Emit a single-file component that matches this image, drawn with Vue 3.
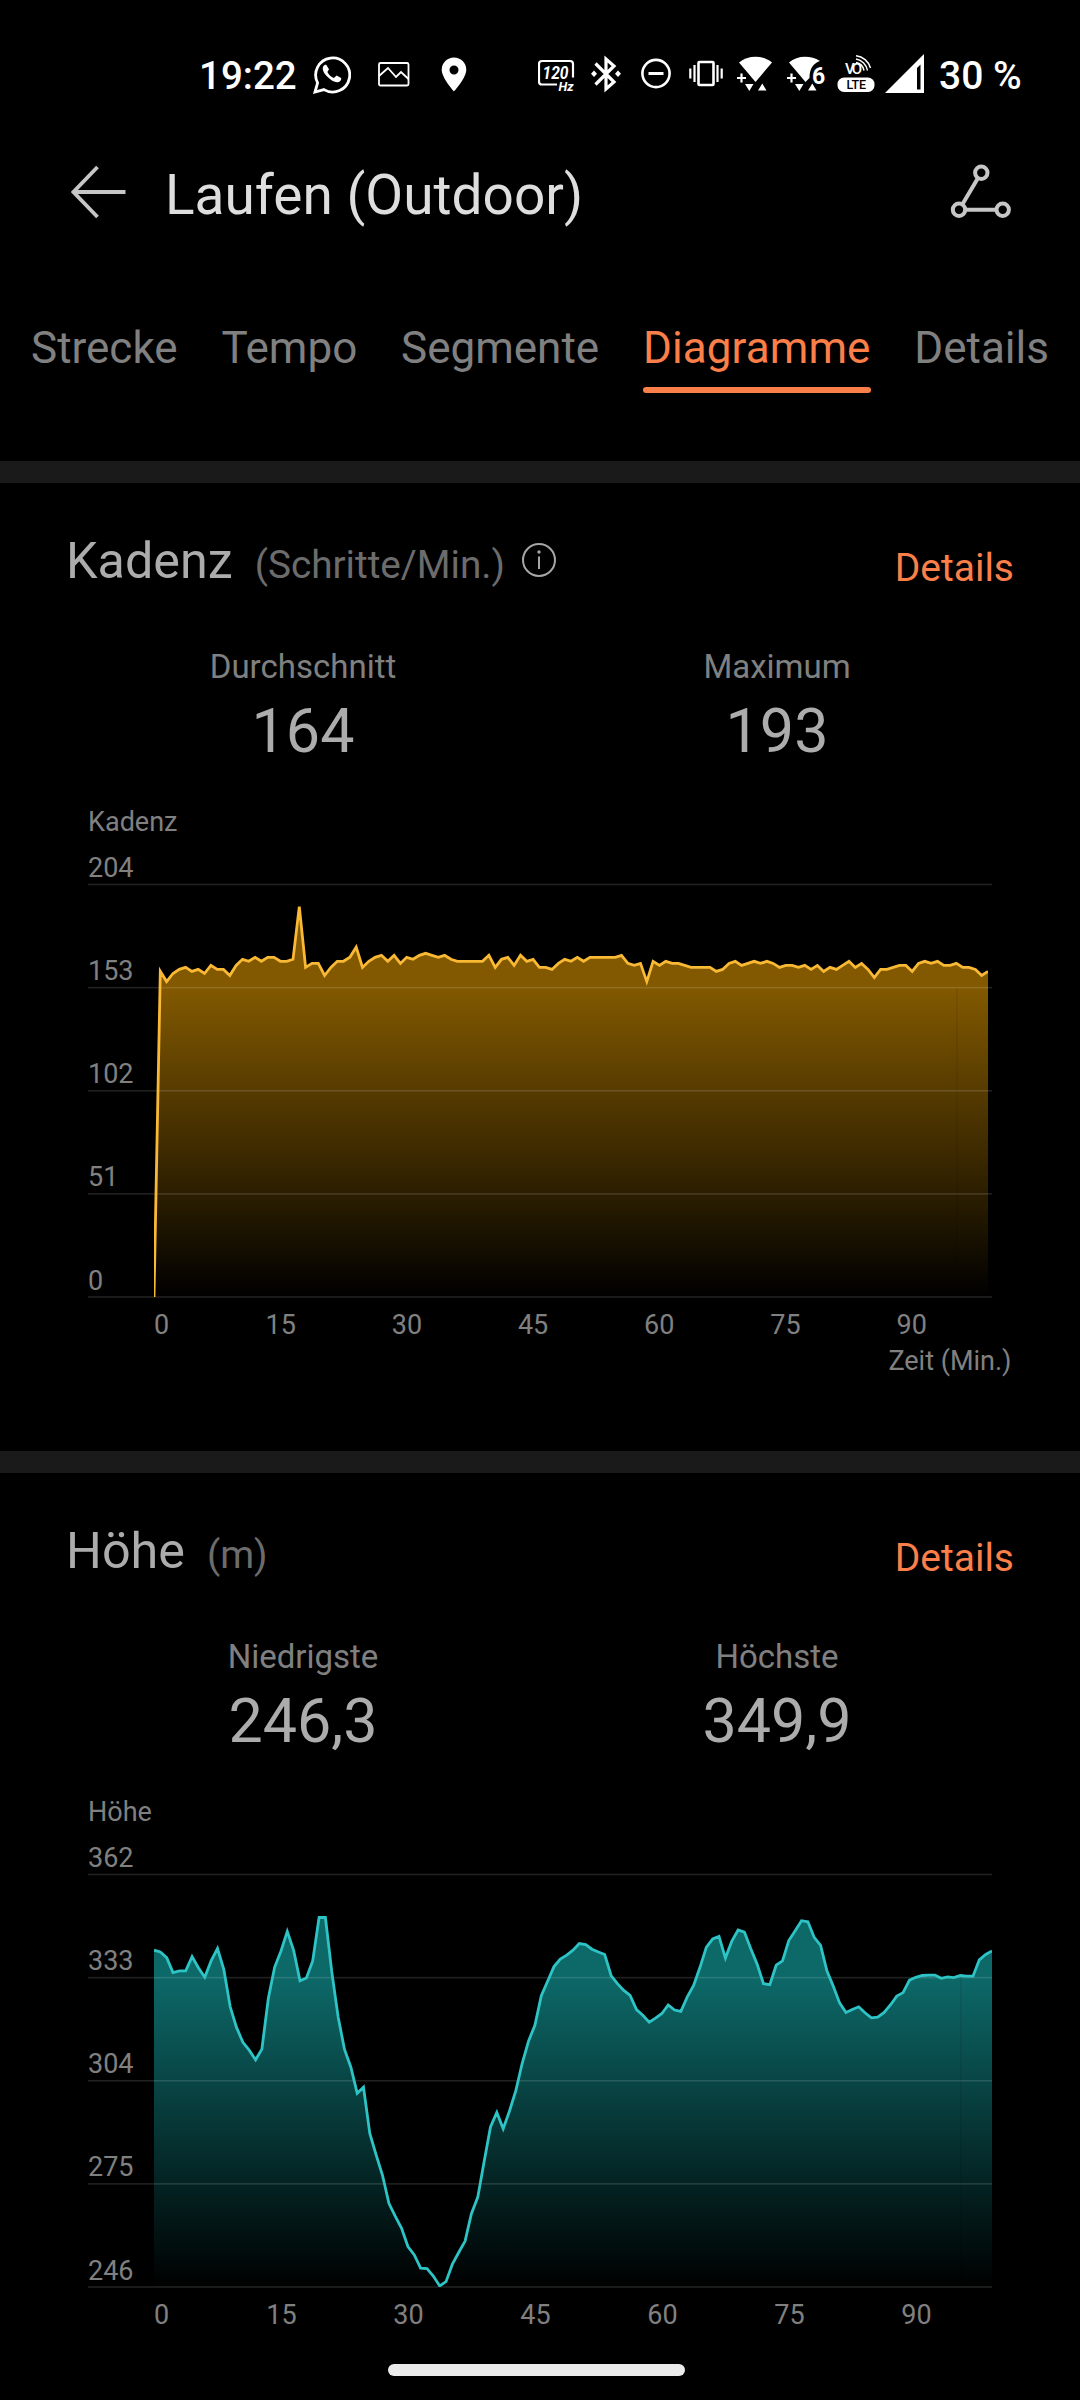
<script setup>
const tabs = ['Strecke', 'Tempo', 'Segmente', 'Diagramme', 'Details']
const activeTab = 'Diagramme'

const cadence = [
  0, 161, 156, 160, 162, 163, 161, 162, 160, 164, 162, 162, 159, 164, 167, 166, 168, 166, 168, 168,
  166, 166, 167, 193, 163, 165, 165, 159, 163, 166, 166, 168, 173, 163, 166, 168, 169, 166, 169, 165,
  168, 167, 169, 170, 169, 168, 169, 167, 166, 166, 166, 166, 166, 169, 163, 167, 168, 164, 169, 166,
  167, 163, 163, 162, 165, 167, 166, 168, 166, 168, 168, 168, 168, 168, 169, 165, 164, 165, 156, 166,
  164, 166, 165, 165, 164, 163, 163, 163, 163, 161, 162, 165, 166, 164, 165, 166, 165, 166, 165, 163,
  164, 164, 163, 164, 162, 164, 161, 163, 162, 164, 166, 163, 165, 162, 158, 162, 162, 163, 164, 164,
  161, 165, 166, 165, 166, 164, 164, 165, 163, 163, 162, 159, 161
]

const altitude = [
  340.7, 340.2, 338.6, 334.4, 334.9, 334.9, 338.9, 335.8, 333.1, 337.7, 341.2, 335.3, 324.8, 319,
  314.8, 312.6, 309.9, 312.9, 327.1, 335.9, 340.5, 346, 340.6, 332.1, 332.9, 337.7, 349.9, 349.9,
  334.6, 322, 312.8, 307.9, 300.5, 302.2, 289.2, 283.1, 277.4, 269.5, 265.9, 262.5, 257.4, 255,
  251.3, 251.2, 249.1, 246.3, 247.5, 252.4, 255.7, 258.9, 266.6, 271.3, 281.2, 291, 295.1, 290.5,
  295.5, 301.3, 308.9, 315.2, 319.6, 327.9, 332, 336.1, 338.2, 339.3, 340.7, 342.6, 342.3, 341,
  340.2, 339.5, 333.6, 331.3, 329.4, 328, 324, 322.4, 320.5, 321.6, 322.9, 325.3, 323.9, 323.5,
  327.6, 330.8, 335.9, 341.5, 343.9, 344.6, 338.5, 343.2, 346.4, 345.8, 341.1, 336.8, 331.3, 331,
  336.5, 337.7, 343.4, 346.2, 349, 348.7, 344.3, 342.1, 334.9, 330.6, 325.9, 323.2, 324, 324.8,
  323.1, 321.7, 321.9, 323.2, 325.3, 327.8, 328.8, 332.3, 333.1, 333.6, 333.7, 333.7, 332.8, 333.2,
  333, 333.6, 333.4, 333.4, 338, 339.5, 340.5
]

// plot area inside the chart svg
const LEFT = 154
const TOP = 81.5
const BOTTOM = 494

const charts = [
  {
    id: 'cadence',
    title: 'Kadenz',
    unit: '(Schritte/Min.)',
    info: true,
    stats: [['Durchschnitt', '164'], ['Maximum', '193']],
    ticks: [204, 153, 102, 51, 0],
    values: cadence,
    right: 988,
    tickStep: 126.2,
    line: '#f9b935',
    fill: '#825900',
    timeLabel: true
  },
  {
    id: 'altitude',
    title: 'Höhe',
    unit: '(m)',
    info: false,
    stats: [['Niedrigste', '246,3'], ['Höchste', '349,9']],
    ticks: [362, 333, 304, 275, 246],
    values: altitude,
    right: 992,
    tickStep: 127,
    line: '#2ec4c6',
    fill: '#0d6868',
    timeLabel: false
  }
]

const minutes = [15, 30, 45, 60, 75, 90]

function tickY(i) {
  return TOP + i * (BOTTOM - TOP) / 4
}

function valueX(chart, i) {
  return LEFT + i * (chart.right - LEFT) / (chart.values.length - 1)
}

function points(chart) {
  const max = chart.ticks[0]
  const min = chart.ticks[4]
  return chart.values.map((v, i) => {
    const y = BOTTOM - (v - min) / (max - min) * (BOTTOM - TOP)
    return valueX(chart, i).toFixed(1) + ',' + y.toFixed(1)
  }).join(' ')
}

function area(chart) {
  return `${LEFT},${BOTTOM} ${points(chart)} ${chart.right},${BOTTOM}`
}
</script>

<template>
  <div class="screen">
    <div class="status-bar">
      <span class="clock">19:22</span>
      <svg class="icon whatsapp" width="38" height="40" viewBox="0 0 38 40">
        <path d="M2 38l2.600-9.200A17 17 0 1 1 11 35.600z" fill="none" stroke="#fff" stroke-width="2.800" />
        <path d="M13.200 10.800c-1.200-.3-2.300.4-3 1.700-1.300 2.700.3 6.200 3.900 10 4 4.100 8.500 6.700 11.700 5.500 1.900-.7 2.800-2.300 2.300-4l-4.500-2.500-2.700 2.400c-2.700-1-5.100-3.100-6.500-6l1.600-2.600z" fill="#fff" />
      </svg>
      <svg class="icon picture" width="32" height="40" viewBox="0 0 32 40">
        <rect x="1" y="9" width="29.500" height="22.500" rx="1.500" />
        <path d="M1 22l9-8 8 9 5-5 7.500 7" />
      </svg>
      <svg class="icon pin" width="26" height="40" viewBox="0 0 26 40">
        <path d="M13 3.500A12.300 12.300 0 0 0 .7 15.800C.7 24 13 37.500 13 37.500S25.300 24 25.300 15.800A12.300 12.300 0 0 0 13 3.500zm0 8a4.500 4.500 0 1 1 0 9 4.500 4.500 0 0 1 0-9z" fill="#fff" fill-rule="evenodd" />
      </svg>
      <div class="status-right">
        <svg class="icon hz" width="37" height="40" viewBox="0 0 37 40">
          <path d="M19 30.500H4a3 3 0 0 1-3-3V10a3 3 0 0 1 3-3h28a3 3 0 0 1 3 3v13.500" fill="none" stroke="#fff" stroke-width="2.200" />
          <text x="4.500" y="25" font-size="18" textLength="26" lengthAdjust="spacingAndGlyphs">120</text>
          <text x="20.500" y="37" font-size="12.500" textLength="15" lengthAdjust="spacingAndGlyphs">Hz</text>
        </svg>
        <svg class="icon bluetooth" width="30" height="40" viewBox="0 0 30 40">
          <path d="M4.500 9.500L23 28l-8 7V5l8 7L4.500 30.500" fill="none" stroke="#fff" stroke-width="3.200" />
          <path d="M3 16.500l3 3.200-3 3.200-3-3.200zM27 16.500l3 3.200-3 3.200-3-3.200z" fill="#fff" />
        </svg>
        <svg class="icon dnd" width="30" height="40" viewBox="0 0 30 40">
          <circle cx="15" cy="19.500" r="13.600" fill="none" stroke="#fff" stroke-width="2.600" />
          <path d="M7.500 19.500h15" stroke="#fff" stroke-width="3" />
        </svg>
        <svg class="icon vibrate" width="34" height="40" viewBox="0 0 34 40">
          <rect x="9.500" y="8" width="15" height="23" rx="1" fill="none" stroke="#fff" stroke-width="2.600" />
          <path d="M5.500 11v17M28.500 11v17M1.300 14.500v10M32.700 14.500v10" stroke="#fff" stroke-width="2.200" />
        </svg>
        <svg class="icon wifi" width="36" height="40" viewBox="0 0 36 40">
          <path d="M2 8.500C11 .8 26 .8 35 8.500L18.500 28z" fill="#fff" />
          <path d="M0 24h9M4.500 19.500v9" stroke="#fff" stroke-width="2.200" />
          <path d="M8 30h8.500l-4.200 7zM21 36.500h8.500l-4.200-7z" fill="#fff" />
        </svg>
        <svg class="icon wifi" width="38" height="40" viewBox="0 0 38 40">
          <path d="M2 8.500C10 1.500 23 .8 33 7c-7 2.500-10.500 8-10.500 17l-4 4z" fill="#fff" />
          <path d="M0 24h9M4.500 19.500v9" stroke="#fff" stroke-width="2.200" />
          <path d="M8 30h8.500l-4.200 7zM21 36.500h8.500l-4.200-7z" fill="#fff" />
          <text class="upright" x="25" y="29.500" font-size="23">6</text>
        </svg>
        <svg class="icon volte" width="38" height="40" viewBox="0 0 38 40">
          <text class="upright light" x="8" y="20" font-size="15" textLength="17">VO</text>
          <path d="M19 8.500a10 10 0 0 1 8 8M19 5a14 14 0 0 1 11.500 11.500M19 1.800A17 17 0 0 1 33.500 14" fill="none" stroke="#fff" stroke-width="1.500" />
          <rect x=".5" y="23.500" width="37" height="14.500" rx="6.500" fill="#fff" />
          <text class="upright dark" x="9.500" y="35" font-size="12.500" textLength="19.500">LTE</text>
        </svg>
        <svg class="icon signal" width="39" height="40" viewBox="0 0 39 40">
          <path d="M0 39L39 0v39zM35.500 10.500L32 14v21.500h3.500z" fill="#fff" fill-rule="evenodd" />
        </svg>
        <span class="battery">30 %</span>
      </div>
    </div>

    <header class="title-bar">
      <svg width="56" height="54" viewBox="0 0 56 54" fill="none" stroke="#c6c6c6" stroke-width="3.800">
        <path d="M3 27h51.500M26.500 2L2.500 27l24 25" />
      </svg>
      <h1>Laufen (Outdoor)</h1>
      <svg class="share" width="62" height="56" viewBox="0 0 62 56" fill="none" stroke="#c6c6c6" stroke-width="4">
        <circle cx="31.300" cy="8.700" r="6.200" />
        <circle cx="9" cy="45.700" r="6.200" />
        <circle cx="52.700" cy="45.700" r="6.200" />
        <path d="M28 14L12.300 40.500M15 45.700h31.500" />
      </svg>
    </header>

    <nav class="tabs">
      <span v-for="tab in tabs" :key="tab" class="tab" :class="{ active: tab === activeTab }">{{ tab }}</span>
    </nav>

    <section v-for="chart in charts" :key="chart.id" class="card">
      <div class="card-head">
        <h2>{{ chart.title }}</h2>
        <span class="unit">{{ chart.unit }}</span>
        <svg v-if="chart.info" class="info" width="36" height="36" viewBox="0 0 36 36">
          <circle cx="18" cy="18" r="16" fill="none" stroke="#a6a6a6" stroke-width="2" />
          <path d="M18 14.500V27" stroke="#a6a6a6" stroke-width="2" />
          <circle cx="18" cy="10" r="1.700" fill="#a6a6a6" />
        </svg>
        <a class="details">Details</a>
      </div>

      <div class="stats">
        <div v-for="[label, value] in chart.stats" :key="label" class="stat">
          <span class="stat-label">{{ label }}</span>
          <span class="stat-value">{{ value }}</span>
        </div>
      </div>

      <svg class="chart" width="1080" height="648" viewBox="0 0 1080 648">
        <defs>
          <linearGradient :id="chart.id" gradientUnits="userSpaceOnUse" x1="0" :y1="tickY(1)" x2="0" :y2="BOTTOM">
            <stop offset="0" :stop-color="chart.fill" />
            <stop offset="1" :stop-color="chart.fill" stop-opacity="0" />
          </linearGradient>
          <clipPath :id="chart.id + '-plot'">
            <rect :x="LEFT" y="0" :width="chart.right - LEFT" :height="BOTTOM" />
          </clipPath>
        </defs>
        <polygon :points="area(chart)" :fill="`url(#${chart.id})`" />
        <rect class="seam" :x="valueX(chart, 127)" :y="tickY(1)" width="1" height="309" />
        <rect
          v-for="(tick, i) in chart.ticks"
          :key="tick"
          class="grid-line"
          x="88"
          :y="tickY(i) - 0.8"
          width="904"
          height="1.6"
        />
        <polyline
          :points="points(chart)"
          fill="none"
          :stroke="chart.line"
          stroke-width="2.8"
          :clip-path="`url(#${chart.id}-plot)`"
        />
        <text x="88" y="28">{{ chart.title }}</text>
        <text v-for="(tick, i) in chart.ticks" :key="'y' + tick" x="88" :y="tickY(i) - 7.4">{{ tick }}</text>
        <text x="154" y="530.500">0</text>
        <text
          v-for="(minute, i) in minutes"
          :key="minute"
          :x="154.500 + (i + 1) * chart.tickStep"
          y="530.500"
          text-anchor="middle"
        >{{ minute }}</text>
        <text v-if="chart.timeLabel" x="1011.500" y="567" text-anchor="end">Zeit (Min.)</text>
      </svg>
    </section>

    <div class="home-bar"></div>
  </div>
</template>

<style>
body {
  margin: 0;
  background: #000;
}
</style>

<style scoped>
.screen {
  position: relative;
  width: 1080px;
  height: 2400px;
  overflow: hidden;
  background: #000;
  font-family: Roboto, 'Noto Sans', sans-serif;
}

.status-bar {
  display: flex;
  align-items: center;
  box-sizing: border-box;
  height: 148px;
  padding: 0 40px 0 199px;
  color: #fff;
  font-size: 38.5px;
  font-weight: 500;
  line-height: 40px;
}

.clock {
  flex: none;
  width: 114px;
}

.clock,
.battery {
  padding-top: 3px;
  white-space: nowrap;
}

.icon {
  flex: none;
}

.icon text {
  fill: #fff;
  font-style: italic;
  font-weight: 700;
}

.icon text.upright {
  font-style: normal;
}

.icon text.light {
  font-weight: 500;
}

.icon text.dark {
  fill: #000;
  font-weight: 500;
}

.picture {
  margin-left: 27px;
  fill: none;
  stroke: #fff;
  stroke-width: 1.8;
}

.pin {
  margin-left: 31px;
}

.status-right {
  display: flex;
  align-items: center;
  margin-left: 71px;
}

.bluetooth {
  margin-left: 16px;
}

.dnd {
  margin-left: 20px;
}

.vibrate {
  margin-left: 18px;
}

.wifi {
  margin-left: 14px;
}

.volte {
  margin-left: 12px;
}

.signal {
  margin-left: 10px;
}

.battery {
  margin-left: 15px;
  font-size: 39px;
}

.title-bar {
  display: flex;
  align-items: center;
  height: 88px;
  padding: 0 68px 0 71px;
}

h1 {
  margin: 6px 0 0 38px;
  color: #dedede;
  font-size: 55px;
  font-weight: 400;
  line-height: 64px;
}

.share {
  margin-left: auto;
}

.tabs {
  display: flex;
  justify-content: space-between;
  box-sizing: border-box;
  height: 225px;
  padding: 80px 31px 0;
}

.tab {
  box-sizing: border-box;
  height: 77px;
  color: #808080;
  font-size: 44px;
  line-height: 64px;
}

.tab.active {
  position: relative;
  color: #fb7f48;
  letter-spacing: .1px;
}

.tab.active::after {
  content: '';
  position: absolute;
  left: 0;
  right: 0;
  bottom: 0;
  height: 6px;
  border-radius: 3px;
  background: #fb7f48;
}

.card {
  height: 968px;
  border-top: 22px solid #1a1a1a;
}

.card-head {
  display: flex;
  align-items: baseline;
  height: 160px;
  padding: 46px 66px 0;
  box-sizing: border-box;
}

h2 {
  margin: 0 22px 0 0;
  color: #acacac;
  font-size: 50.3px;
  font-weight: 400;
  line-height: 64px;
}

.unit {
  color: #6c6c6c;
  font-size: 38.7px;
}

.info {
  align-self: flex-start;
  margin: 13px 0 0 16px;
}

.details {
  position: relative;
  top: 3px;
  margin-left: auto;
  color: #fb7f48;
  font-size: 39px;
}

.stats {
  display: flex;
  height: 160px;
  padding: 0 66px;
}

.stat {
  flex: 1;
  display: flex;
  flex-direction: column;
  align-items: center;
}

.stat-label {
  margin-top: 3px;
  color: #808080;
  font-size: 33px;
  line-height: 42px;
}

.stat-value {
  color: #acacac;
  font-size: 61px;
  line-height: 86px;
}

.chart {
  display: block;
}

.chart text {
  fill: #808080;
  font-size: 27px;
}

.grid-line {
  fill: #fff;
  fill-opacity: .13;
}

.seam {
  fill: #000;
  fill-opacity: .12;
}

.home-bar {
  position: absolute;
  left: 388px;
  bottom: 24px;
  width: 297px;
  height: 12px;
  border-radius: 6px;
  background: #ebebeb;
}
</style>
